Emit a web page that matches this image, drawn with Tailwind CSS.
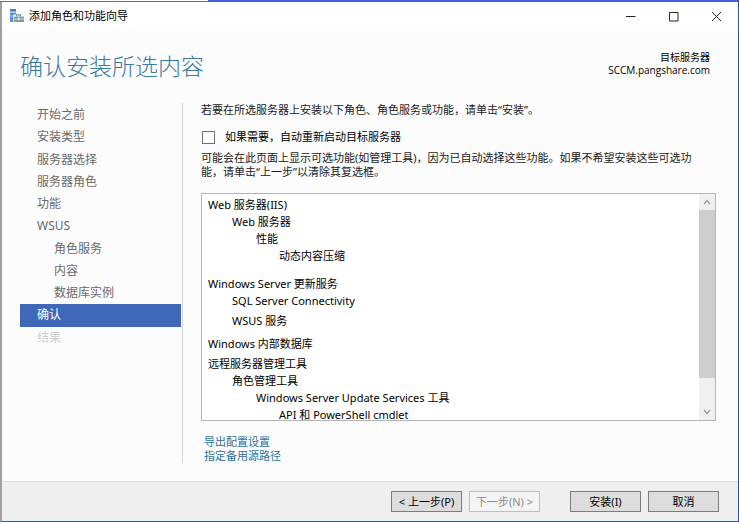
<!DOCTYPE html>
<html lang="zh-CN">
<head>
  <meta charset="UTF-8" />
  <meta name="viewport" content="width=device-width, initial-scale=1.0"/>
  <title>添加角色和功能向导</title>
  <script src="https://cdn.jsdelivr.net/npm/@tailwindcss/browser@4"></script>
</head>
<body class="font-['Noto_Sans','Noto_Sans_CJK_SC',sans-serif] text-[11px] text-[#1a1a1a]">
  <div class="flex h-screen flex-col bg-[#fcfcfc] border-l-2 border-r border-b border-l-[#a0a0a0] border-r-[#2f4f8f] border-b-[#3f5878]">
    <!-- top edge -->
    <div class="-ml-0.5 flex h-0.5 shrink-0">
      <div class="w-[208px] border-b border-[#707070] bg-white"></div>
      <div class="flex-1 bg-[#3f5fdc]"></div>
    </div>

    <!-- title bar -->
    <header class="flex h-7 shrink-0 items-center bg-white pl-[7px]">
      <svg class="h-4 w-4" viewBox="0 0 16 16" aria-hidden="true">
        <path d="M1 1h6v2.6H1z" fill="#3f7fd8"/>
        <path d="M1 4.4h6v2.2H5.2L4 8v6H1z" fill="#5a93e0"/>
        <path d="M1 7.5h3v1H1z" fill="#a9c8f2"/>
        <path d="M7.5 8.5V6.8h4v1.7" fill="none" stroke="#7a8ea0" stroke-width="1.2"/>
        <path d="M4.6 8.6h10.4v5.4H4.6z" fill="#8599aa"/>
        <path d="M4.6 10.6h10.4v.8H4.6z" fill="#dfe6ec"/>
        <path d="M9 10h1.6v2H9z" fill="#f4f6f8"/>
      </svg>
      <h1 class="ml-1 flex-1 text-black">添加角色和功能向导</h1>
      <button class="flex h-7 w-[43px] items-center justify-center" aria-label="最小化">
        <svg class="h-[11px] w-[11px]" viewBox="0 0 11 11"><path d="M1 5.5h9.5" stroke="#222" fill="none"/></svg>
      </button>
      <button class="flex h-7 w-[43px] items-center justify-center" aria-label="最大化">
        <svg class="h-[11px] w-[11px]" viewBox="0 0 11 11"><path d="M1.5 1.5h8.5v8.5h-8.5z" stroke="#222" fill="none"/></svg>
      </button>
      <button class="flex h-7 w-[43px] items-center justify-center" aria-label="关闭">
        <svg class="h-[11px] w-[11px]" viewBox="0 0 11 11"><path d="M1 1l9 9M10 1l-9 9" stroke="#222" fill="none"/></svg>
      </button>
    </header>

    <!-- heading -->
    <div class="flex h-[73px] shrink-0 items-center justify-between pl-[18px] pr-7">
      <h2 class="text-[23px] font-light text-[#3b7a9e]">确认安装所选内容</h2>
      <div class="pb-1.5 text-right font-['Open_Sans','Noto_Sans_CJK_SC',sans-serif] text-[10px] leading-[13px] text-black">
        <p>目标服务器</p>
        <p>SCCM.pangshare.com</p>
      </div>
    </div>

    <div class="flex min-h-0 flex-1">
      <!-- steps -->
      <nav class="mb-[18px] w-[181px] shrink-0 border-r border-[#d4d4d4] pl-[18px] pr-px pt-px text-[12px] leading-[22px] text-[#6a6a6a]">
        <div class="grid h-[245px] auto-rows-fr">
          <a href="#" class="pl-[17px]">开始之前</a>
          <a href="#" class="pl-[17px]">安装类型</a>
          <a href="#" class="pl-[17px]">服务器选择</a>
          <a href="#" class="pl-[17px]">服务器角色</a>
          <a href="#" class="pl-[17px]">功能</a>
          <a href="#" class="pl-[17px]">WSUS</a>
          <a href="#" class="pl-[34px]">角色服务</a>
          <a href="#" class="pl-[34px]">内容</a>
          <a href="#" class="pl-[34px]">数据库实例</a>
          <a href="#" aria-current="step" class="bg-[#3f69b8] pl-[17px] text-white">确认</a>
          <span class="pl-[17px] text-[#cfcfcf]">结果</span>
        </div>
      </nav>

      <!-- confirmation -->
      <main class="flex min-w-0 flex-1 flex-col pl-[18px] pr-[22px]">
        <p class="leading-[14px]">若要在所选服务器上安装以下角色、角色服务或功能，请单击“安装”。</p>
        <label class="mt-3 flex items-center leading-[16px] text-black">
          <input type="checkbox" class="mx-px mr-2.5 h-[13px] w-[13px] appearance-none border border-[#707070] bg-white"/>
          如果需要，自动重新启动目标服务器
        </label>
        <p class="mt-1.5 pr-4 leading-[14px]">可能会在此页面上显示可选功能(如管理工具)，因为已自动选择这些功能。如果不希望安装这些可选功能，请单击“上一步”以清除其复选框。</p>

        <div class="mt-3.5 flex min-h-0 flex-1 border border-[#b4b4b4] bg-white">
          <div class="min-w-0 flex-1 overflow-hidden pl-1.5 pt-0.5 leading-[17px] text-black">
            <p>Web 服务器(IIS)</p>
            <p class="pl-6">Web 服务器</p>
            <p class="pl-12">性能</p>
            <p class="pl-[71px]">动态内容压缩</p>
            <p class="mt-[11px]">Windows Server 更新服务</p>
            <p class="pl-6">SQL Server Connectivity</p>
            <p class="mt-[3px] pl-6">WSUS 服务</p>
            <p class="mt-1.5">Windows 内部数据库</p>
            <p class="mt-[3px]">远程服务器管理工具</p>
            <p class="pl-6">角色管理工具</p>
            <p class="pl-12">Windows Server Update Services 工具</p>
            <p class="pl-[71px]">API 和 PowerShell cmdlet</p>
          </div>
          <div class="flex w-4 flex-col bg-[#f0f0f0]">
            <button class="flex h-4 items-center justify-center" aria-label="向上滚动">
              <svg class="h-2 w-2" viewBox="0 0 8 8"><path d="M1 6l3-3.5L7 6" stroke="#999" stroke-width="1.2" fill="none"/></svg>
            </button>
            <div class="flex-1 pb-[26px]"><div class="h-full bg-[#cdcdcd]"></div></div>
            <button class="flex h-4 items-center justify-center" aria-label="向下滚动">
              <svg class="h-2 w-2" viewBox="0 0 8 8"><path d="M1 2l3 3.5L7 2" stroke="#999" stroke-width="1.2" fill="none"/></svg>
            </button>
          </div>
        </div>

        <div class="mb-[18px] mt-3.5 flex flex-col items-start pl-[3px] leading-[14px] text-[#2f7298]">
          <a href="#">导出配置设置</a>
          <a href="#">指定备用源路径</a>
        </div>
      </main>
    </div>

    <!-- buttons -->
    <footer class="flex h-10 shrink-0 items-center justify-end gap-[7px] border-t border-[#dcdcdc] bg-[#efefef] pr-[19px] text-black">
      <button class="h-[21px] w-[71px] border border-[#7c7c7c] bg-[#dddddd] leading-[19px]">&lt; 上一步(P)</button>
      <button disabled class="h-[21px] w-[71px] border border-[#bfbfbf] bg-[#f4f4f4] leading-[19px] text-[#8c8c8c]">下一步(N) &gt;</button>
      <button class="ml-[23px] h-[21px] w-[71px] border border-[#7c7c7c] bg-[#dddddd] leading-[19px]">安装(I)</button>
      <button class="h-[21px] w-[71px] border border-[#7c7c7c] bg-[#dddddd] leading-[19px]">取消</button>
    </footer>
  </div>
</body>
</html>
